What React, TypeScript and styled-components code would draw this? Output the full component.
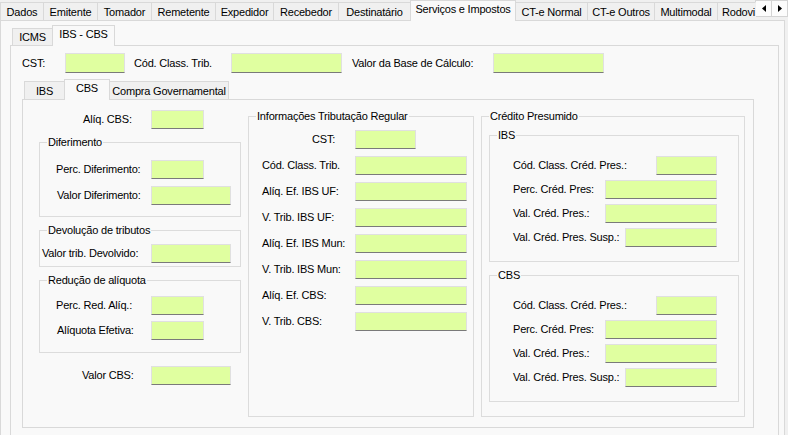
import React from 'react';
import styled, { createGlobalStyle } from 'styled-components';

const C = {
  form: '#f0f0f0',
  page: '#f9f9f9',
  tabBorder: '#d9d9d9',
  group: '#dcdcdc',
  field: '#e0ffa0',
};

const GlobalStyle = createGlobalStyle`
  html, body { margin: 0; padding: 0; background: ${C.form}; overflow: hidden; }
  body {
    font-family: "Liberation Sans", Arial, sans-serif;
    font-size: 11px;
    letter-spacing: -0.2px;
    color: #000;
  }
`;

const Window = styled.div`
  width: 788px;
  height: 435px;
  overflow: hidden;
  background: ${C.form};
  display: flex;
  flex-direction: column;
`;

const TabControl = styled.div<{ $ml?: number; $mt?: number }>`
  display: flex;
  flex-direction: column;
  flex: none;
  margin-left: ${(p) => p.$ml ?? 0}px;
  margin-top: ${(p) => p.$mt ?? 0}px;
`;

const TabStrip = styled.div<{ $pl?: number }>`
  display: flex;
  align-items: flex-end;
  height: 20px;
  flex: none;
  padding-left: ${(p) => p.$pl ?? 0}px;
`;

const Tab = styled.div<{ $w: number; $active?: boolean; $clip?: boolean; $low?: boolean }>`
  position: relative;
  z-index: ${(p) => (p.$active ? 2 : 1)};
  flex: none;
  box-sizing: border-box;
  width: ${(p) => p.$w}px;
  height: ${(p) => (p.$active ? 21 : p.$low ? 17 : 18)}px;
  margin-bottom: ${(p) => (p.$active ? -1 : 0)}px;
  margin-right: -1px;
  padding-top: ${(p) => (p.$active ? 2 : p.$low ? 2 : 3)}px;
  padding-left: ${(p) => (p.$clip ? 4 : 0)}px;
  border: 1px solid ${C.tabBorder};
  border-bottom: none;
  border-right-color: ${(p) => (p.$clip ? 'transparent' : C.tabBorder)};
  background: ${(p) => (p.$active ? C.page : C.form)};
  text-align: ${(p) => (p.$clip ? 'left' : 'center')};
  line-height: 13px;
  white-space: nowrap;
  overflow: hidden;
`;

const ScrollButtons = styled.div`
  display: flex;
  align-self: flex-start;
  flex: none;
`;

const ScrollButton = styled.div`
  box-sizing: border-box;
  width: 17px;
  height: 17px;
  border: 1px solid #d4d4d4;
  background: #fcfcfc;
  display: flex;
  align-items: center;
  justify-content: center;
  & + & {
    margin-left: -1px;
  }
`;

const Page = styled.div<{ $w: number; $h: number }>`
  box-sizing: border-box;
  flex: none;
  width: ${(p) => p.$w}px;
  height: ${(p) => p.$h}px;
  border: 1px solid ${C.tabBorder};
  background: ${C.page};
`;

const OuterPage = styled(Page)`
  display: flex;
  flex-direction: column;
`;

const TaxPage = styled(Page)`
  display: flex;
  flex-direction: column;
`;

const CbsPage = styled(Page)`
  display: flex;
  align-items: flex-start;
  padding-left: 16px;
`;

const Column = styled.div<{ $w: number }>`
  display: flex;
  flex-direction: column;
  flex: none;
  width: ${(p) => p.$w}px;
`;

const Group = styled.div<{ $w: number; $h?: number; $mt?: number; $ml?: number; $pb?: number }>`
  box-sizing: border-box;
  display: flex;
  flex-direction: column;
  flex: none;
  width: ${(p) => p.$w}px;
  ${(p) => (p.$h ? `height: ${p.$h}px;` : '')}
  margin-top: ${(p) => p.$mt ?? 0}px;
  margin-left: ${(p) => p.$ml ?? 0}px;
  padding-bottom: ${(p) => p.$pb ?? 0}px;
  border: 1px solid ${C.group};
`;

const Legend = styled.div`
  align-self: flex-start;
  height: 15px;
  line-height: 15px;
  margin: -8px 0 0 7px;
  padding: 0 1px;
  background: ${C.page};
  white-space: nowrap;
`;

const Row = styled.div<{ $mt?: number; $pl?: number; $h?: number }>`
  display: flex;
  align-items: center;
  flex: none;
  height: ${(p) => p.$h ?? 19}px;
  margin-top: ${(p) => p.$mt ?? 0}px;
  padding-left: ${(p) => p.$pl ?? 0}px;
`;

const Label = styled.span<{ $w: number; $ml?: number }>`
  flex: none;
  width: ${(p) => p.$w}px;
  margin-left: ${(p) => p.$ml ?? 0}px;
  line-height: 13px;
  white-space: nowrap;
`;

const TextBox = styled.input<{ $w: number; $h?: number }>`
  flex: none;
  box-sizing: border-box;
  width: ${(p) => p.$w}px;
  height: ${(p) => p.$h ?? 19}px;
  margin: 0;
  padding: 0;
  background: ${C.field};
  border: 1px solid #e0e0e0;
  border-bottom-color: #7a7a7a;
  outline: none;
  font: inherit;
`;

type FieldProps = { label: string; pl: number; lw: number; iw: number; mt?: number };

const Field = ({ label, pl, lw, iw, mt }: FieldProps) => (
  <Row $mt={mt} $pl={pl}>
    <Label $w={lw}>{label}</Label>
    <TextBox $w={iw} readOnly />
  </Row>
);

const Arrow = ({ dir }: { dir: 'left' | 'right' }) => (
  <svg width="4" height="7" viewBox="0 0 4 7">
    {dir === 'left' ? <path d="M4 0 L0 3.5 L4 7 Z" fill="#000" /> : <path d="M0 0 L4 3.5 L0 7 Z" fill="#000" />}
  </svg>
);

const topTabs: [string, number, boolean?][] = [
  ['Dados', 44],
  ['Emitente', 55],
  ['Tomador', 55],
  ['Remetente', 65],
  ['Expedidor', 59],
  ['Recebedor', 66],
  ['Destinatário', 73],
  ['Serviços e Impostos', 106, true],
  ['CT-e Normal', 73],
  ['CT-e Outros', 68],
  ['Multimodal', 64],
];

const midRows: [string, number, number, number][] = [
  ['Cód. Class. Trib.', 13, 93, 112],
  ['Alíq. Ef. IBS UF:', 13, 93, 112],
  ['V. Trib. IBS UF:', 13, 93, 112],
  ['Alíq. Ef. IBS Mun:', 13, 93, 112],
  ['V. Trib. IBS Mun:', 13, 93, 112],
  ['Alíq. Ef. CBS:', 13, 93, 112],
  ['V. Trib. CBS:', 13, 93, 112],
];

const creditRows: [string, number, number][] = [
  ['Cód. Class. Créd. Pres.:', 143, 61],
  ['Perc. Créd. Pres:', 92, 112],
  ['Val. Créd. Pres.:', 92, 112],
  ['Val. Créd. Pres. Susp.:', 112, 92],
];

const CreditGroup = ({ title, mt }: { title: string; mt: number }) => (
  <Group $w={250} $mt={mt} $ml={7} $pb={14}>
    <Legend>{title}</Legend>
    {creditRows.map(([l, lw, iw], i) => (
      <Field key={l} label={l} pl={23} lw={lw} iw={iw} mt={i === 0 ? 13 : 5} />
    ))}
  </Group>
);

export default function App() {
  return (
    <>
      <GlobalStyle />
      <Window>
        <TabStrip>
          {topTabs.map(([t, w, a]) => (
            <Tab key={t} $w={w} $active={a}>
              {t}
            </Tab>
          ))}
          <Tab $w={39} $clip>
            Rodovi
          </Tab>
          <ScrollButtons>
            <ScrollButton>
              <Arrow dir="left" />
            </ScrollButton>
            <ScrollButton>
              <Arrow dir="right" />
            </ScrollButton>
          </ScrollButtons>
        </TabStrip>
        <OuterPage $w={785} $h={420}>
          <TabControl $ml={9} $mt={4}>
            <TabStrip $pl={2}>
              <Tab $w={41} $low>
                ICMS
              </Tab>
              <Tab $w={63} $active>
                IBS - CBS
              </Tab>
            </TabStrip>
            <TaxPage $w={769} $h={400}>
              <Row $mt={7} $pl={11} $h={20}>
                <Label $w={43}>CST:</Label>
                <TextBox $w={60} $h={20} readOnly />
                <Label $w={97} $ml={9}>
                  Cód. Class. Trib.
                </Label>
                <TextBox $w={111} $h={20} readOnly />
                <Label $w={141} $ml={10}>
                  Valor da Base de Cálculo:
                </Label>
                <TextBox $w={111} $h={20} readOnly />
              </Row>
              <TabControl $ml={11} $mt={6}>
                <TabStrip $pl={2}>
                  <Tab $w={41}>IBS</Tab>
                  <Tab $w={46} $active>
                    CBS
                  </Tab>
                  <Tab $w={120}>Compra Governamental</Tab>
                </TabStrip>
                <CbsPage $w={732} $h={329}>
                  <Column $w={202}>
                    <Field label="Alíq. CBS:" pl={44} lw={68} iw={53} mt={10} />
                    <Group $w={202} $mt={13} $pb={11}>
                      <Legend>Diferimento</Legend>
                      <Field label="Perc. Diferimento:" pl={16} lw={95} iw={53} mt={10} />
                      <Field label="Valor Diferimento:" pl={17} lw={94} iw={80} mt={7} />
                    </Group>
                    <Group $w={202} $mt={13} $pb={3}>
                      <Legend>Devolução de tributos</Legend>
                      <Field label="Valor trib. Devolvido:" pl={2} lw={109} iw={80} mt={6} />
                    </Group>
                    <Group $w={202} $mt={13} $pb={12}>
                      <Legend>Redução de alíquota</Legend>
                      <Field label="Perc. Red. Alíq.:" pl={16} lw={95} iw={53} mt={8} />
                      <Field label="Alíquota Efetiva:" pl={17} lw={94} iw={53} mt={6} />
                    </Group>
                    <Field label="Valor CBS:" pl={43} lw={69} iw={80} mt={13} />
                  </Column>
                  <Group $w={226} $h={301} $mt={16} $ml={7}>
                    <Legend>Informações Tributação Regular</Legend>
                    <Field label="CST:" pl={63} lw={43} iw={61} mt={6} />
                    {midRows.map(([l, pl, lw, iw]) => (
                      <Field key={l} label={l} pl={pl} lw={lw} iw={iw} mt={7} />
                    ))}
                  </Group>
                  <Group $w={264} $h={301} $mt={16} $ml={7}>
                    <Legend>Crédito Presumido</Legend>
                    <CreditGroup title="IBS" mt={11} />
                    <CreditGroup title="CBS" mt={13} />
                  </Group>
                </CbsPage>
              </TabControl>
            </TaxPage>
          </TabControl>
        </OuterPage>
      </Window>
    </>
  );
}
